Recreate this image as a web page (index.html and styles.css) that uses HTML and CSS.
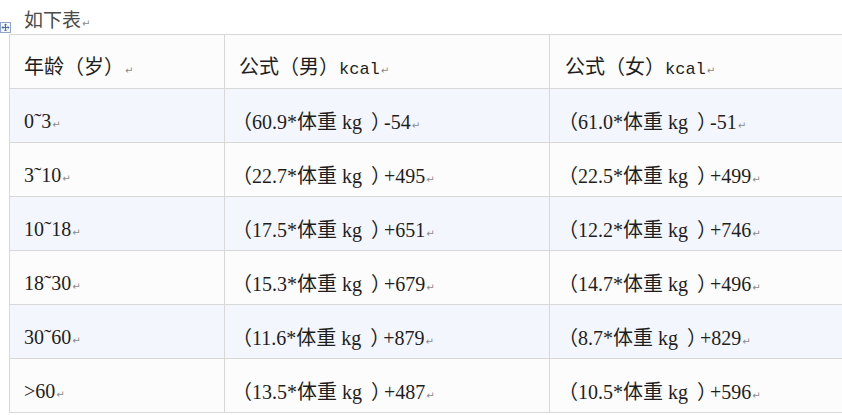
FILE: index.html
```html
<!DOCTYPE html>
<html lang="zh">
<head>
<meta charset="utf-8">
<link rel="stylesheet" href="styles.css">
</head>
<body>
<div class="page">
  <p class="title">如下表<span class="ret">↵</span></p>
  <div class="table-wrap">
    <span class="move-handle"><svg width="9" height="9" viewBox="0 0 9 9"><path d="M4.5 1v7M1 4.5h7M3.3 2.2l1.2-1.2 1.2 1.2M3.3 6.8l1.2 1.2 1.2-1.2M2.2 3.3l-1.2 1.2 1.2 1.2M6.8 3.3l1.2 1.2 -1.2 1.2" fill="none" stroke="#3a5f9a" stroke-width="0.9"/></svg></span>
    <table class="tbl">
      <colgroup><col class="c1"><col class="c2"><col class="c3"></colgroup>
      <tr class="head"><td>年龄（岁）<span class="ret">↵</span></td><td>公式（男）<span class="mono">kcal</span><span class="ret">↵</span></td><td>公式（女）<span class="mono">kcal</span><span class="ret">↵</span></td></tr>
      <tr class="alt"><td>0<span class="tl">˜</span>3<span class="ret">↵</span></td><td><span class="lp">（</span>60.9*体重 kg<span class="rp">）</span>-54<span class="ret">↵</span></td><td><span class="lp">（</span>61.0*体重 kg<span class="rp">）</span>-51<span class="ret">↵</span></td></tr>
      <tr><td>3<span class="tl">˜</span>10<span class="ret">↵</span></td><td><span class="lp">（</span>22.7*体重 kg<span class="rp">）</span>+495<span class="ret">↵</span></td><td><span class="lp">（</span>22.5*体重 kg<span class="rp">）</span>+499<span class="ret">↵</span></td></tr>
      <tr class="alt"><td>10<span class="tl">˜</span>18<span class="ret">↵</span></td><td><span class="lp">（</span>17.5*体重 kg<span class="rp">）</span>+651<span class="ret">↵</span></td><td><span class="lp">（</span>12.2*体重 kg<span class="rp">）</span>+746<span class="ret">↵</span></td></tr>
      <tr><td>18<span class="tl">˜</span>30<span class="ret">↵</span></td><td><span class="lp">（</span>15.3*体重 kg<span class="rp">）</span>+679<span class="ret">↵</span></td><td><span class="lp">（</span>14.7*体重 kg<span class="rp">）</span>+496<span class="ret">↵</span></td></tr>
      <tr class="alt"><td>30<span class="tl">˜</span>60<span class="ret">↵</span></td><td><span class="lp">（</span>11.6*体重 kg<span class="rp">）</span>+879<span class="ret">↵</span></td><td><span class="lp">（</span>8.7*体重 kg<span class="rp">）</span>+829<span class="ret">↵</span></td></tr>
      <tr><td>&gt;60<span class="ret">↵</span></td><td><span class="lp">（</span>13.5*体重 kg<span class="rp">）</span>+487<span class="ret">↵</span></td><td><span class="lp">（</span>10.5*体重 kg<span class="rp">）</span>+596<span class="ret">↵</span></td></tr>
    </table>
  </div>
</div>
</body>
</html>
```
FILE: styles.css
```css
html, body {
  margin: 0;
  padding: 0;
  background: #ffffff;
  overflow: hidden;
}
.page {
  width: 842px;
  height: 415px;
  overflow: hidden;
  font-family: "Liberation Serif", "Noto Sans CJK SC", serif;
  color: #1e1e1e;
}
.title {
  margin: 0;
  padding: 8px 0 0 24px;
  height: 26px;
  box-sizing: content-box;
  font-size: 19px;
  line-height: 26px;
  color: #4a4a4a;
}
.ret {
  font-size: 10px;
  color: #8a8a8a;
  font-family: "DejaVu Sans", sans-serif;
  margin-left: 1px;
}
.mono {
  font-family: "Liberation Mono", monospace;
  font-size: 17px;
}
.tl {
  font-size: 22px;
}
.lp {
  font-family: "Noto Sans CJK SC", sans-serif;
  font-feature-settings: "halt";
  margin-left: 3px;
}
.rp {
  font-family: "Noto Sans CJK SC", sans-serif;
  font-feature-settings: "halt";
  margin-left: 9px;
  margin-right: 3px;
}
.table-wrap {
  position: relative;
  padding-left: 9px;
}
.move-handle {
  position: absolute;
  left: 0;
  top: -12px;
  width: 9px;
  height: 9px;
  border: 1px solid #8fa6c8;
  background: #f4f7fb;
  display: flex;
}
.tbl {
  border-collapse: collapse;
  table-layout: fixed;
  width: 860px;
  font-size: 20px;
}
.c1 { width: 215px; }
.c2 { width: 325px; }
.c3 { width: 320px; }
.tbl td {
  border: 1px solid #d8d8d8;
  height: 54px;
  padding: 20px 0 0 14px;
  box-sizing: border-box;
  vertical-align: top;
  white-space: nowrap;
  line-height: 24px;
}
.tbl td:nth-child(3) { padding-left: 15px; }
.tbl tr { background: #fcfcfc; }
.tbl tr.alt { background: #f3f7fd; }
```
